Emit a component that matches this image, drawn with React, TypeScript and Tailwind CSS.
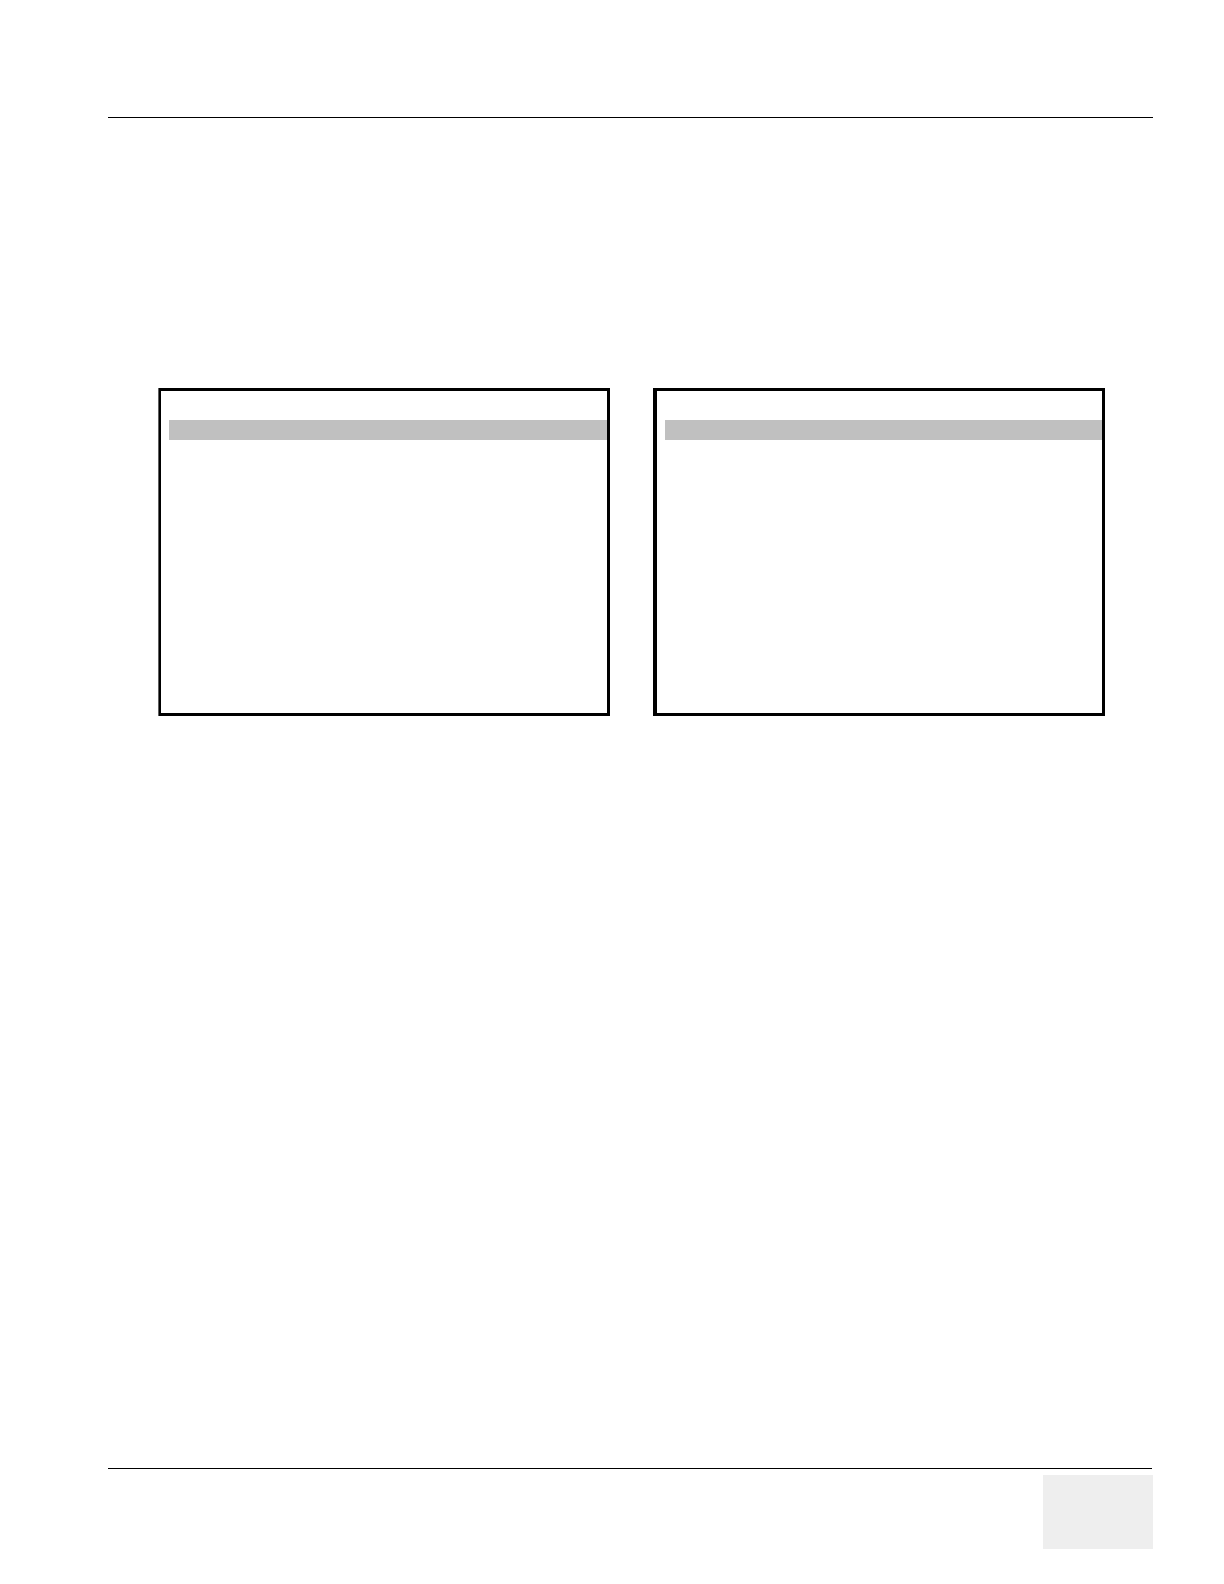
export default function App() {
  return (
    <div className="flex min-h-screen flex-col bg-white pt-[117px] pr-[71px] pb-[35px] pl-[108px]">
      <header className="border-t border-black" />

      <main className="mt-[270px] grid flex-1 grid-cols-2 content-start gap-x-[43px] pr-12 pl-[50px]">
        <section className="border-l border-[#606060]">
          <div className="min-h-[328px] border-[3px] border-l-2 border-black pt-[29px] pl-2">
            <div className="h-5 bg-[#c0c0c0]" />
          </div>
        </section>
        <section className="min-h-[328px] border-[3px] border-l-4 border-black pt-[29px] pl-2">
          <div className="h-5 bg-[#c0c0c0]" />
        </section>
      </main>

      <footer className="flex flex-col">
        <div className="mr-px border-t border-black" />
        <div className="mt-1.5 h-[74px] w-[110px] self-end bg-[#eeeeee]" />
      </footer>
    </div>
  );
}
